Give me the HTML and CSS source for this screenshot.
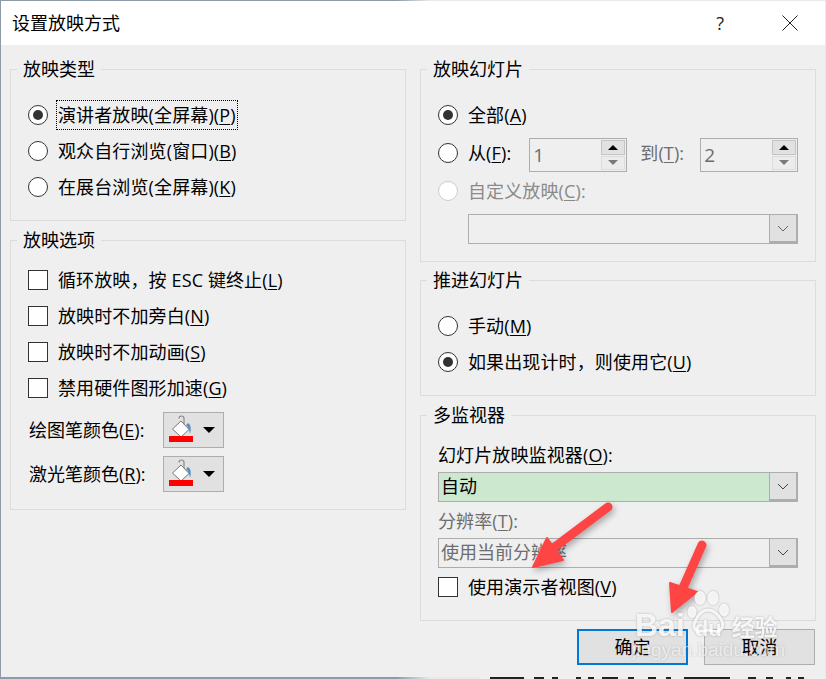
FILE: index.html
```html
<!DOCTYPE html>
<html lang="zh-CN">
<head>
<meta charset="utf-8">
<title>设置放映方式</title>
<link rel="stylesheet" href="styles.css">
</head>
<body>
<svg class="backdrop" width="346" height="2" viewBox="0 0 346 2">
  <rect width="346" height="2" fill="#efefef"/>
  <g fill="#222"><rect x="10" width="34" height="2"/><rect x="54" width="10" height="2"/><rect x="72" width="6" height="2"/><rect x="96" width="5" height="2"/><rect x="108" width="6" height="2"/><rect x="122" width="16" height="2"/><rect x="148" width="6" height="2"/><rect x="168" width="8" height="2"/><rect x="186" width="5" height="2"/><rect x="204" width="46" height="2"/><rect x="268" width="8" height="2"/><rect x="286" width="7" height="2"/><rect x="306" width="5" height="2"/><rect x="318" width="6" height="2"/></g>
</svg>
<div class="dialog">
  <header class="titlebar">
    <span class="title">设置放映方式</span>
    <span class="help">?</span>
    <svg class="close" width="16" height="16" viewBox="0 0 16 16"><path d="M.5.5l15 15M15.500.5l-15 15" stroke="#222" fill="none"/></svg>
  </header>
  <main class="content">
    <div class="column">
      <section class="group g-type">
        <h2 class="legend">放映类型</h2>
        <div class="rows">
          <div class="row"><i class="radio on"></i><span class="label focus">演讲者放映(全屏幕)(<u>P</u>)</span></div>
          <div class="row"><i class="radio"></i><span class="label">观众自行浏览(窗口)(<u>B</u>)</span></div>
          <div class="row"><i class="radio"></i><span class="label">在展台浏览(全屏幕)(<u>K</u>)</span></div>
        </div>
      </section>
      <section class="group g-options">
        <h2 class="legend">放映选项</h2>
        <div class="rows tight">
          <div class="row"><i class="check"></i><span class="label">循环放映，按 ESC 键终止(<u>L</u>)</span></div>
          <div class="row"><i class="check"></i><span class="label">放映时不加旁白(<u>N</u>)</span></div>
          <div class="row"><i class="check"></i><span class="label">放映时不加动画(<u>S</u>)</span></div>
          <div class="row"><i class="check"></i><span class="label">禁用硬件图形加速(<u>G</u>)</span></div>
        </div>
        <div class="pens">
          <div class="pen"><span class="pen-label">绘图笔颜色(<u>E</u>):</span>
            <button class="color">
              <svg width="60" height="36" viewBox="0 0 60 36"><path d="M16 6.500a2.500 2.500 0 0 1 5 0V13" fill="none" stroke="#8a8a8a" stroke-width="1.200"/><path d="M9.500 17L18 9l8 8.500-8 7.500z" fill="#fff" stroke="#777"/><path d="M25 11c3 1.500 3.500 6 2 11-.5-3-1.500-7-4-9z" fill="#5a8fc4"/><rect x="6" y="24" width="24" height="6" fill="#f00"/><path d="M40 15h12l-6 6z" fill="#000"/></svg>
            </button>
          </div>
          <div class="pen"><span class="pen-label">激光笔颜色(<u>R</u>):</span>
            <button class="color">
              <svg width="60" height="36" viewBox="0 0 60 36"><path d="M16 6.500a2.500 2.500 0 0 1 5 0V13" fill="none" stroke="#8a8a8a" stroke-width="1.200"/><path d="M9.500 17L18 9l8 8.500-8 7.500z" fill="#fff" stroke="#777"/><path d="M25 11c3 1.500 3.500 6 2 11-.5-3-1.500-7-4-9z" fill="#5a8fc4"/><rect x="6" y="24" width="24" height="6" fill="#f00"/><path d="M40 15h12l-6 6z" fill="#000"/></svg>
            </button>
          </div>
        </div>
      </section>
    </div>
    <div class="column">
      <section class="group g-slides">
        <h2 class="legend">放映幻灯片</h2>
        <div class="rows">
          <div class="row"><i class="radio on"></i><span class="label">全部(<u>A</u>)</span></div>
          <div class="row from">
            <i class="radio"></i><span class="label">从(<u>F</u>):</span>
            <div class="spin"><span>1</span><div class="spin-btns"><b class="up"></b><b class="down"></b></div></div>
            <span class="label muted to">到(<u>T</u>):</span>
            <div class="spin"><span>2</span><div class="spin-btns"><b class="up"></b><b class="down"></b></div></div>
          </div>
          <div class="row custom"><i class="radio off"></i><span class="label faded">自定义放映(<u>C</u>):</span></div>
        </div>
        <div class="combo indent">
          <span class="combo-text"></span>
          <span class="combo-btn"><svg width="12" height="7" viewBox="0 0 12 7"><path d="M1 1l5 5 5-5" fill="none" stroke="#666"/></svg></span>
        </div>
      </section>
      <section class="group g-advance">
        <h2 class="legend">推进幻灯片</h2>
        <div class="rows">
          <div class="row"><i class="radio"></i><span class="label">手动(<u>M</u>)</span></div>
          <div class="row"><i class="radio on"></i><span class="label">如果出现计时，则使用它(<u>U</u>)</span></div>
        </div>
      </section>
      <section class="group g-monitor">
        <h2 class="legend">多监视器</h2>
        <div class="field-label first">幻灯片放映监视器(<u>O</u>):</div>
        <div class="combo green">
          <span class="combo-text">自动</span>
          <span class="combo-btn"><svg width="12" height="7" viewBox="0 0 12 7"><path d="M1 1l5 5 5-5" fill="none" stroke="#444"/></svg></span>
        </div>
        <div class="field-label muted">分辨率(<u>T</u>):</div>
        <div class="combo">
          <span class="combo-text muted">使用当前分辨率</span>
          <span class="combo-btn"><svg width="12" height="7" viewBox="0 0 12 7"><path d="M1 1l5 5 5-5" fill="none" stroke="#444"/></svg></span>
        </div>
        <div class="row presenter"><i class="check"></i><span class="label">使用演示者视图(<u>V</u>)</span></div>
      </section>
    </div>
  </main>
  <footer class="actions">
    <button class="btn primary">确定</button>
    <button class="btn">取消</button>
  </footer>
</div>

<svg class="arrows" width="826" height="679" viewBox="0 0 826 679">
  <g fill="#ff4444" stroke="#ff4444" stroke-linejoin="round">
    <path d="M608 507L552 549" stroke-width="9" stroke-linecap="round" fill="none"/>
    <path d="M547 538L563 560L533 567z" stroke-width="2"/>
    <path d="M702 545L682 590" stroke-width="9" stroke-linecap="round" fill="none"/>
    <path d="M670 583L697 592L672 612z" stroke-width="2"/>
  </g>
</svg>

<div class="watermark">
  <svg class="paw" width="48" height="46" viewBox="0 0 48 46"><g fill="#fff" fill-opacity=".85"><ellipse cx="13" cy="8" rx="5.500" ry="7"/><ellipse cx="26" cy="8" rx="5.500" ry="7"/><ellipse cx="37" cy="20" rx="5" ry="6.500"/><ellipse cx="5" cy="22" rx="4.500" ry="6"/></g><path d="M9 30c3-7 8-10 12-10s9 3 13 9c3 5 2 11-3 12-4 1-7-1-10-1s-6 2-10 1c-5-1-5-7-2-11z" fill="none" stroke="#fff" stroke-opacity=".85" stroke-width="3"/></svg>
  <div class="wm-brand"><span>Bai</span><span class="wm-du">du</span><span class="wm-cn">经验</span></div>
  <div class="wm-url">jingyan.baidu.com</div>
</div>
</body>
</html>
```
FILE: styles.css
```css
* { box-sizing: border-box; }
html, body { margin: 0; height: 100%; }
body {
  background: linear-gradient(90deg, #8d9ba8 0 48%, #e9e9e9 52%);
  overflow: hidden;
  padding: 1px 1px 0 1px;
  font-family: "Open Sans", "Noto Sans CJK SC", sans-serif;
  font-size: 18px;
  line-height: 26px;
  color: #000;
}
.backdrop { position: absolute; right: 0; bottom: 0; display: block; }
.dialog {
  position: relative;
  width: 824px;
  height: 676px;
  background: #efefef;
  display: flex;
  flex-direction: column;
}
.titlebar {
  height: 44px;
  background: #fff;
  display: flex;
  align-items: center;
  padding: 0 27px 0 11px;
  flex: none;
}
.title { flex: 1; }
.help { margin-right: 58px; color: #222; }
.content {
  display: grid;
  grid-template-columns: 396px 396px;
  column-gap: 14px;
  padding: 24px 9px 0 9px;
  height: 576px;
  flex: none;
}
.column { display: flex; flex-direction: column; }
.group { border: 1px solid #dcdcdc; flex: none; }
.g-type { height: 152px; margin-bottom: 19px; }
.g-options { height: 270px; }
.g-slides { height: 193px; margin-bottom: 18px; }
.g-advance { height: 116px; margin-bottom: 19px; }
.g-monitor { height: 206px; }
.legend {
  margin: -14px 0 0 6px;
  padding: 0 6px;
  width: fit-content;
  background: #efefef;
  font-size: 18px;
  font-weight: 400;
  line-height: 26px;
}
.rows { margin-top: 15px; padding-left: 17px; }
.rows.tight { margin-top: 9px; }
.row { display: flex; align-items: center; height: 36px; }
.radio, .check { display: block; flex: none; width: 20px; height: 20px; background: #fff; margin-right: 10px; }
.radio { border-radius: 50%; border: 1px solid #333; display: flex; align-items: center; justify-content: center; }
.radio.on::after { content: ""; width: 10px; height: 10px; border-radius: 50%; background: #333; }
.radio.off { border-color: #ccc; }
.check { border: 1px solid #333; }
.label { white-space: nowrap; letter-spacing: .12px; }
.focus { outline: 1px dotted #000; outline-offset: 1px; }
u { text-underline-offset: 2px; }
.muted { color: #6d6d6d; }
.faded { color: #8a8a8a; }
.pens { padding: 0 0 0 18px; margin-top: 6px; }
.pen { display: flex; align-items: center; height: 36px; margin-bottom: 8px; }
.pen-label { width: 134px; }
.color { width: 61px; height: 36px; padding: 0; border: 1px solid #adadad; background: #e1e1e1; display: block; }
.color svg { display: block; margin-left: -1px; margin-top: -1px; }
.from { margin-top: 2px; }
.spin {
  width: 98px; height: 34px;
  border: 1px solid #adadad;
  display: flex;
  justify-content: space-between;
  padding: 1px 1px 1px 3px;
  color: #6d6d6d;
  margin: 4px 0 0 18px;
  font-size: 19px;
  line-height: 30px;
}
.to { margin-left: 13px; width: 60px; }
.to + .spin { margin-left: 0; }
.spin-btns { width: 24px; display: flex; flex-direction: column; gap: 1px; }
.spin-btns b { flex: 1; display: flex; align-items: center; justify-content: center; background: #e1e1e1; border: 1px solid #c4c4c4; }
.spin-btns b.down { background: #ececec; border-color: #dcdcdc; }
.up::after { content: ""; border: 5px solid transparent; border-top: 0; border-bottom: 5px solid #000; }
.down::after { content: ""; border: 5px solid transparent; border-bottom: 0; border-top: 5px solid #7a7a7a; }
.custom { margin-top: 2px; }
.combo {
  display: flex;
  width: 360px;
  height: 30px;
  border: 1px solid #adadad;
  margin-left: 17px;
  line-height: 27px;
}
.combo.indent { width: 330px; margin-left: 47px; margin-top: 5px; }
.combo.green { background: #cce8cf; }
.combo-text { flex: 1; padding-left: 2px; }
.combo-btn {
  width: 28px;
  background: #e1e1e1;
  border-left: 1px solid #adadad;
  border-right: 1px solid #adadad;
  border-bottom: 2px solid #adadad;
  display: flex; align-items: center; justify-content: center;
  flex: none;
}
.field-label { margin-left: 17px; height: 26px; letter-spacing: .12px; }
.field-label.first { margin-top: 14px; margin-bottom: 4px; }
.field-label.muted { margin-top: 6px; margin-bottom: 4px; }
.presenter { margin: 1px 0 0 17px; }
.actions { display: flex; gap: 16px; justify-content: flex-end; padding: 8px 10px 0 0; }
.btn {
  width: 111px; height: 36px;
  font: inherit;
  line-height: 26px;
  padding: 0;
  background: #e1e1e1;
  border: 1px solid #adadad;
  color: #000;
}
.btn.primary { border: 2px solid #0078d7; }
.arrows { position: absolute; left: 0; top: 0; pointer-events: none; filter: drop-shadow(2px 3px 3px rgba(0,0,0,.3)); }
.watermark { position: absolute; left: 632px; top: 590px; width: 150px; height: 72px; color: rgba(255,255,255,.85); pointer-events: none; filter: drop-shadow(0 0 1px rgba(110,110,110,.55)); }
.paw { position: absolute; left: 55px; top: 0; }
.wm-brand { position: absolute; top: 18px; left: 3px; display: flex; align-items: baseline; font-family: "Liberation Sans", sans-serif; font-weight: 700; font-size: 32px; line-height: 34px; white-space: nowrap; }
.wm-du { margin-left: 10px; font-size: 22px; }
.wm-cn { margin-left: 10px; font-family: "Noto Sans CJK SC", sans-serif; font-size: 23px; font-weight: 700; }
.wm-url { position: absolute; top: 48px; left: 0; font-family: "Liberation Sans", sans-serif; font-size: 19px; line-height: 24px; white-space: nowrap; color: rgba(255,255,255,.6); }
```
